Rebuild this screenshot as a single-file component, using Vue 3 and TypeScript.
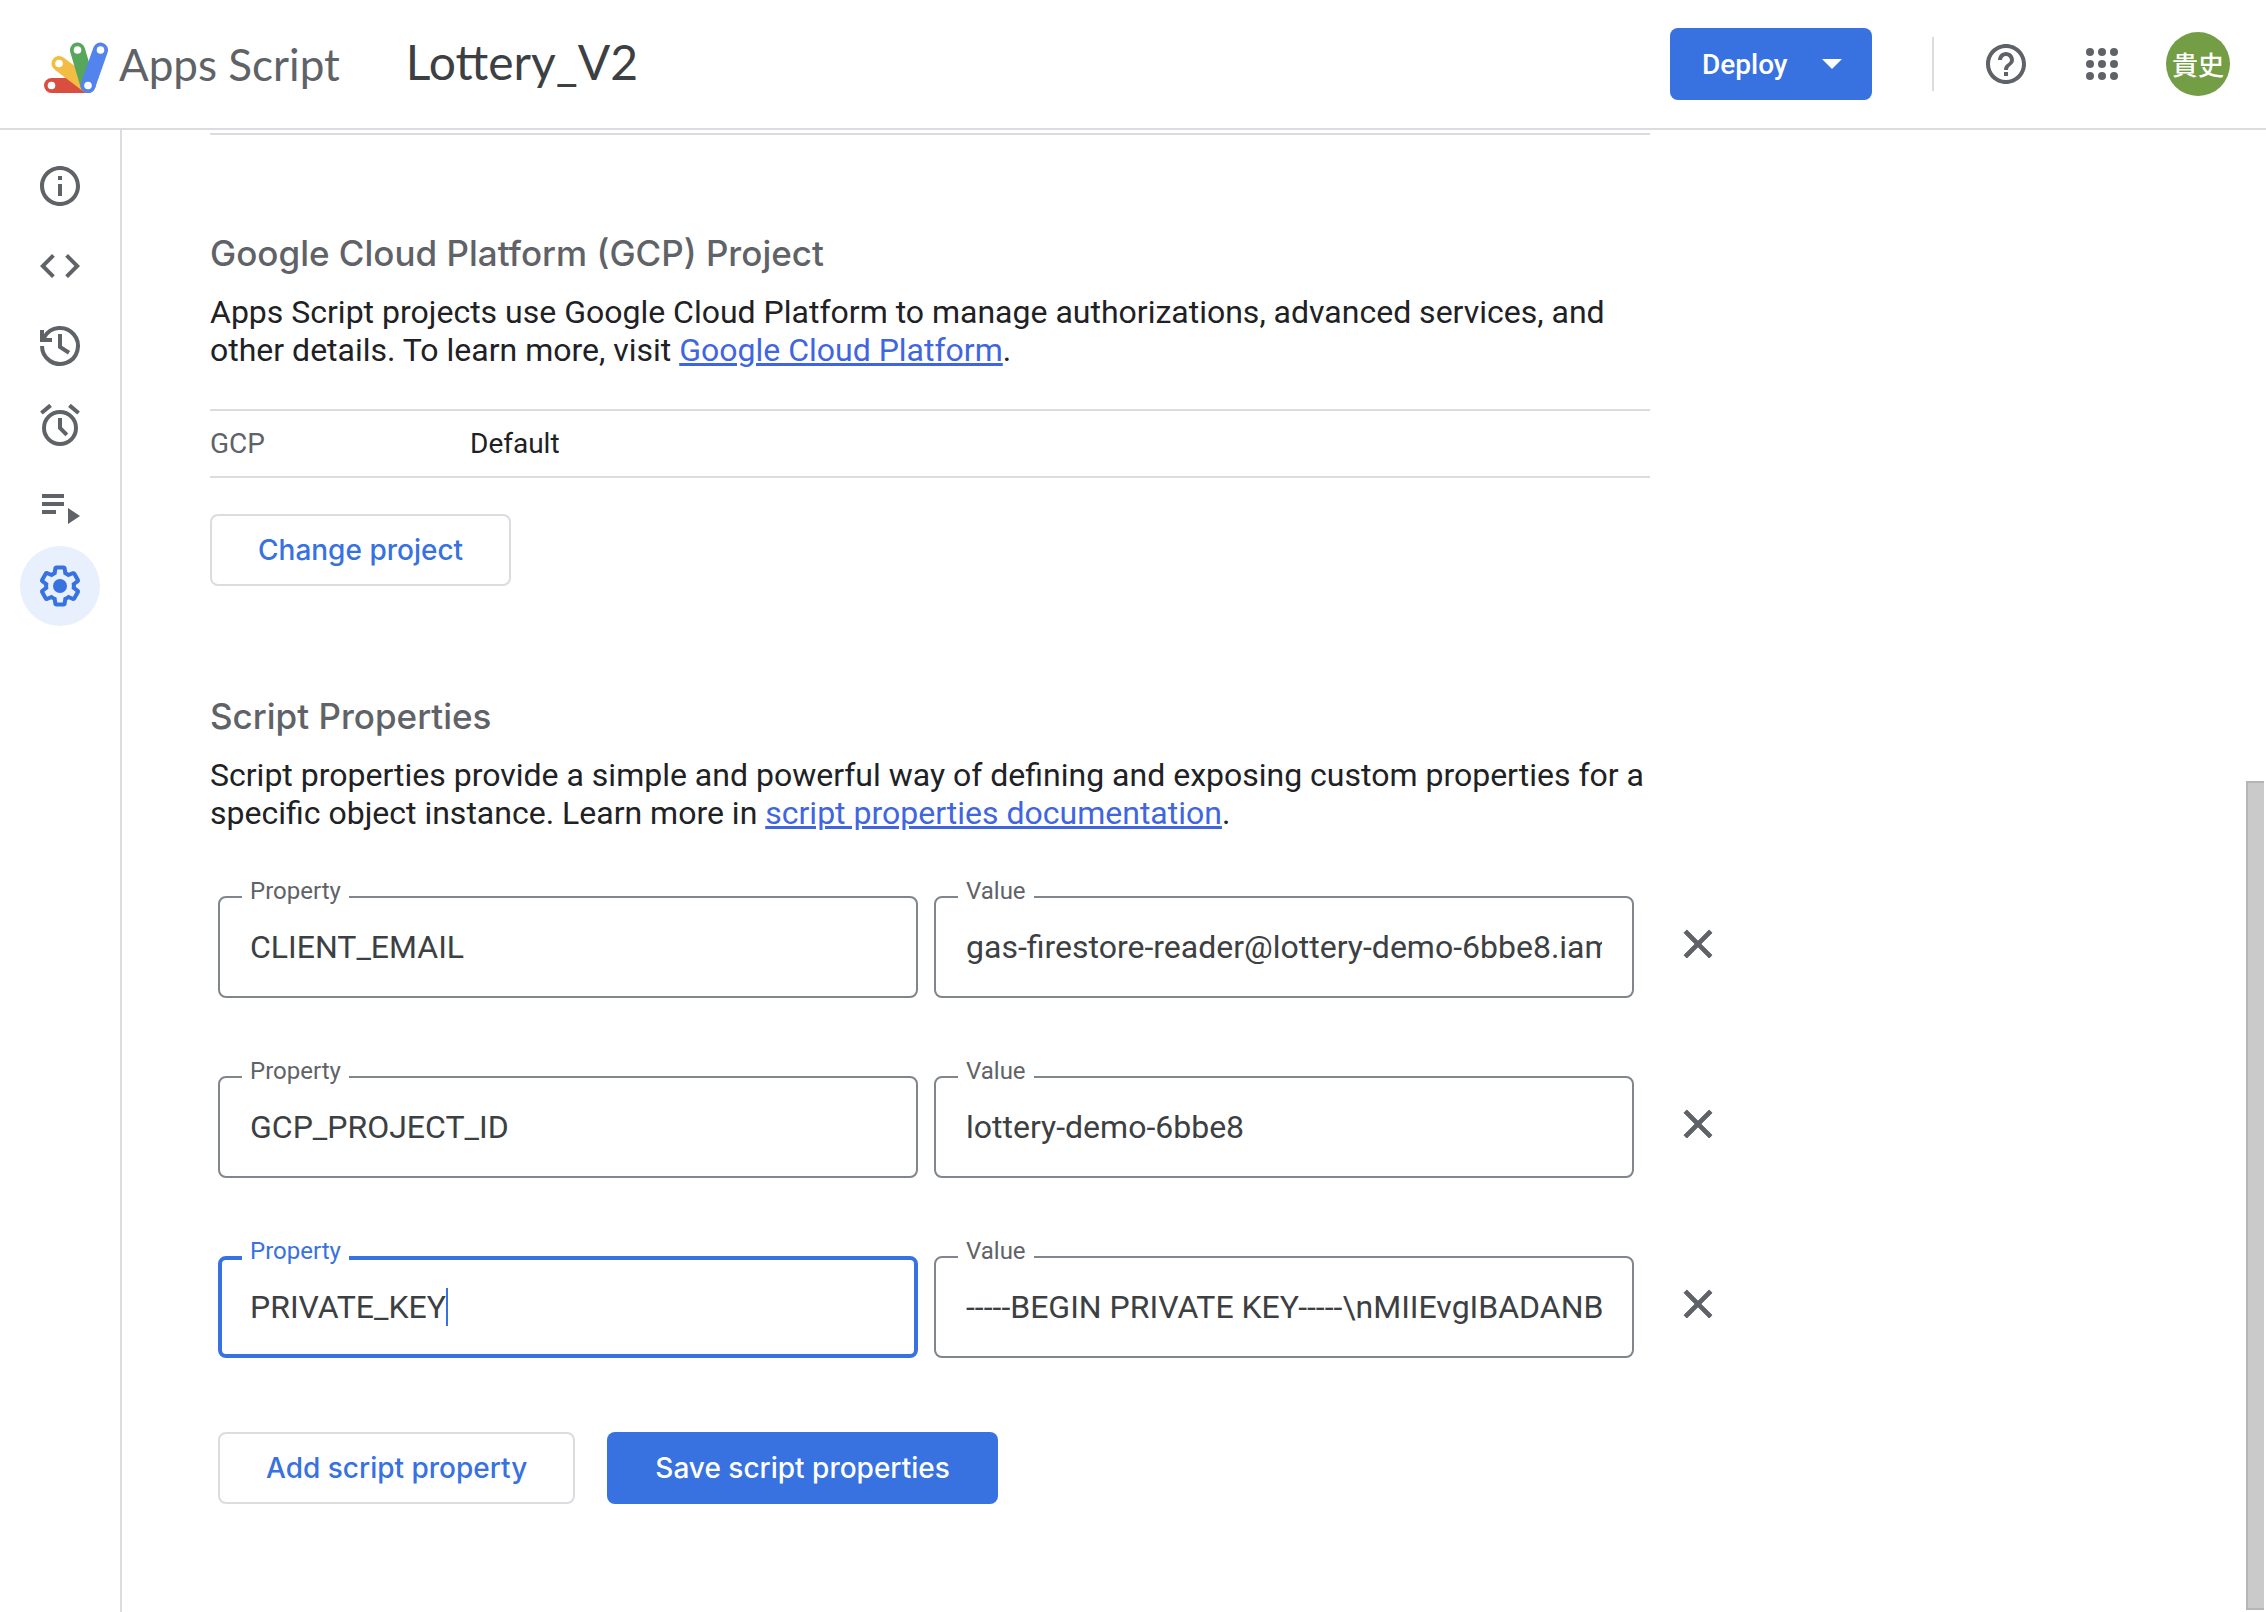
<script setup lang="ts">
import { onMounted, ref } from 'vue'

interface NavItem {
  id: string
  label: string
  active?: boolean
}

interface ScriptProperty {
  id: number
  name: string
  value: string
}

const navItems: NavItem[] = [
  { id: 'overview', label: 'Overview' },
  { id: 'editor', label: 'Editor' },
  { id: 'history', label: 'Project history' },
  { id: 'triggers', label: 'Triggers' },
  { id: 'executions', label: 'Executions' },
  { id: 'settings', label: 'Project settings', active: true },
]

const properties = ref<ScriptProperty[]>([
  { id: 1, name: 'CLIENT_EMAIL', value: 'gas-firestore-reader@lottery-demo-6bbe8.iam.gserviceaccount.com' },
  { id: 2, name: 'GCP_PROJECT_ID', value: 'lottery-demo-6bbe8' },
  { id: 3, name: 'PRIVATE_KEY', value: '-----BEGIN PRIVATE KEY-----\\nMIIEvgIBADANBgkqhkiG9w0BAQEFAASC' },
])

const focusedId = ref(3)
const caretOffset = ref(0)

const scroll = { thumb: 56 }

// The caret sits at the end of the focused name, so its offset is the width of that text.
function placeCaret() {
  const input = document.getElementById(`name-${focusedId.value}`) as HTMLInputElement | null
  const context = document.createElement('canvas').getContext('2d')
  if (!input || !context) return
  const style = getComputedStyle(input)
  context.font = `${style.fontSize} ${style.fontFamily}`
  caretOffset.value = Math.round(context.measureText(input.value).width)
}

function removeProperty(id: number) {
  properties.value = properties.value.filter((p) => p.id !== id)
}

function addProperty() {
  properties.value.push({ id: Date.now(), name: '', value: '' })
}

onMounted(placeCaret)
</script>

<template>
  <div class="page">
    <header class="topbar">
      <a class="brand" href="#">
        <svg class="logo" viewBox="0 0 66 52" aria-hidden="true">
          <g fill="none" stroke-width="15" stroke-linecap="round">
            <path stroke="#d94f3f" d="M8.5 43.5H45" />
            <path stroke="#f2bd42" d="M16 21.5L45 43.5" />
            <path stroke="#58a55c" d="M34.5 8L45 43.5" />
            <path stroke="#5383ec" d="M57.5 8L45 43.5" />
          </g>
          <g fill="#fff">
            <circle cx="8.5" cy="43.5" r="3.8" />
            <circle cx="16" cy="21.5" r="3.8" />
            <circle cx="34.5" cy="8" r="3.8" />
            <circle cx="57.5" cy="8" r="3.8" />
            <circle cx="45" cy="43.5" r="3.8" />
          </g>
        </svg>
        <span class="brand-name">Apps Script</span>
      </a>
      <h1 class="project-name">Lottery_V2</h1>
      <div class="actions">
        <button class="deploy" type="button">
          Deploy
          <svg class="arrow" viewBox="0 0 20 10" aria-hidden="true"><path d="M0 0h20L10 10z" /></svg>
        </button>
        <span class="divider"></span>
        <button class="icon-button" type="button" aria-label="Help">
          <svg class="icon" viewBox="0 0 24 24">
            <path d="M11 18h2v-2h-2v2zm1-16C6.48 2 2 6.48 2 12s4.48 10 10 10 10-4.48 10-10S17.52 2 12 2zm0 18c-4.41 0-8-3.59-8-8s3.59-8 8-8 8 3.59 8 8-3.59 8-8 8zm0-14c-2.21 0-4 1.79-4 4h2c0-1.1.9-2 2-2s2 .9 2 2c0 2-3 1.75-3 5h2c0-2.25 3-2.5 3-5 0-2.21-1.79-4-4-4z" />
          </svg>
        </button>
        <button class="icon-button" type="button" aria-label="Google apps">
          <svg class="icon" viewBox="0 0 24 24">
            <template v-for="y in [6, 12, 18]" :key="y">
              <circle v-for="x in [6, 12, 18]" :key="x" :cx="x" :cy="y" r="2" />
            </template>
          </svg>
        </button>
        <button class="avatar" type="button">貴史</button>
      </div>
    </header>

    <div class="body">
      <nav class="sidebar" aria-label="Project">
        <a
          v-for="item in navItems"
          :key="item.id"
          class="nav-item"
          :class="{ active: item.active }"
          href="#"
          :aria-label="item.label"
        >
          <svg class="icon" viewBox="0 0 24 24">
            <path v-if="item.id === 'overview'" d="M11 7h2v2h-2zm0 4h2v6h-2zm1-9C6.48 2 2 6.48 2 12s4.48 10 10 10 10-4.48 10-10S17.52 2 12 2zm0 18c-4.41 0-8-3.59-8-8s3.59-8 8-8 8 3.59 8 8-3.59 8-8 8z" />
            <path v-else-if="item.id === 'editor'" d="M9.4 16.6L4.8 12l4.6-4.6L8 6l-6 6 6 6 1.4-1.4zm5.2 0l4.6-4.6-4.6-4.6L16 6l6 6-6 6-1.4-1.4z" />
            <g v-else-if="item.id === 'history'" fill="none" stroke="currentColor" stroke-width="2">
              <path d="M3 12A9 9 0 1 0 4.200 7.500L3.600 8.600" />
              <path d="M3 4v5h5" />
              <path d="M12 6v6.500l4.500 2.900" />
            </g>
            <g v-else-if="item.id === 'triggers'" fill="none" stroke="currentColor" stroke-width="2">
              <circle cx="12" cy="13" r="8" />
              <path d="M12 8v5l3.400 3.400M2.700 5.500l4.600-3.800M21.300 5.500l-4.600-3.800" />
            </g>
            <path v-else-if="item.id === 'executions'" d="M3 6h11v2H3zM3 10h11v2H3zM3 14h7v2H3zM16 13l6 4-6 4z" />
            <g v-else>
              <path d="M13.85 22.25h-3.7c-.74 0-1.36-.54-1.45-1.27l-.27-1.89c-.27-.14-.53-.29-.79-.46l-1.8.72c-.7.26-1.47-.03-1.81-.65L2.2 15.53c-.35-.66-.2-1.44.36-1.88l1.53-1.19c-.01-.15-.02-.3-.02-.46 0-.15.01-.31.02-.46l-1.52-1.19c-.59-.45-.74-1.26-.37-1.88l1.85-3.19c.34-.62 1.11-.9 1.79-.63l1.81.73c.26-.17.52-.32.78-.46l.27-1.91c.09-.7.71-1.25 1.44-1.25h3.7c.74 0 1.36.54 1.45 1.27l.27 1.89c.27.14.53.29.79.46l1.8-.72c.71-.26 1.48.03 1.82.65l1.84 3.18c.36.66.2 1.44-.36 1.88l-1.52 1.19c.01.15.02.3.02.46s-.01.31-.02.46l1.52 1.19c.56.45.72 1.23.37 1.86l-1.86 3.22c-.34.62-1.11.9-1.8.63l-1.8-.72c-.26.17-.52.32-.78.46l-.27 1.91c-.1.68-.72 1.22-1.46 1.22zm-3.23-2h2.76l.37-2.55.53-.22c.44-.18.88-.44 1.34-.78l.45-.34 2.38.96 1.38-2.4-2.03-1.58.07-.56c.03-.26.06-.51.06-.78s-.03-.53-.06-.78l-.07-.56 2.03-1.58-1.39-2.4-2.39.96-.45-.35c-.42-.32-.87-.58-1.33-.77l-.52-.22-.37-2.55h-2.76l-.37 2.55-.53.21c-.44.19-.88.44-1.34.79l-.45.33-2.38-.95-1.39 2.39 2.03 1.58-.07.56a7 7 0 0 0-.06.79c0 .26.02.53.06.78l.07.56-2.03 1.58 1.38 2.4 2.39-.96.45.35c.43.33.86.58 1.33.77l.53.22.38 2.55z" />
              <circle cx="12" cy="12" r="3.5" />
            </g>
          </svg>
        </a>
      </nav>

      <main class="content">
        <hr class="rule" />

        <section class="section">
          <h2>Google Cloud Platform (GCP) Project</h2>
          <p>
            Apps Script projects use Google Cloud Platform to manage authorizations, advanced services, and
            other details. To learn more, visit <a href="#">Google Cloud Platform</a>.
          </p>
          <table class="details">
            <tbody>
              <tr>
                <th scope="row">GCP</th>
                <td>Default</td>
              </tr>
            </tbody>
          </table>
          <button class="button outlined" type="button">Change project</button>
        </section>

        <section class="section">
          <h2>Script Properties</h2>
          <p>
            Script properties provide a simple and powerful way of defining and exposing custom properties for a
            specific object instance. Learn more in <a href="#">script properties documentation</a>.
          </p>
          <form class="properties" @submit.prevent>
            <div v-for="property in properties" :key="property.id" class="row">
              <div class="field" :class="{ focused: property.id === focusedId }">
                <input :id="`name-${property.id}`" v-model="property.name" type="text" />
                <label :for="`name-${property.id}`">Property</label>
                <span v-if="property.id === focusedId" class="caret-line">
                  <span class="caret" :style="{ marginLeft: `${caretOffset}px` }"></span>
                </span>
              </div>
              <div class="field">
                <input :id="`value-${property.id}`" v-model="property.value" type="text" />
                <label :for="`value-${property.id}`">Value</label>
              </div>
              <button class="remove" type="button" aria-label="Remove script property" @click="removeProperty(property.id)">
                <svg class="icon" viewBox="0 0 24 24">
                  <path d="M19 6.41L17.59 5 12 10.59 6.41 5 5 6.41 10.59 12 5 17.59 6.41 19 12 13.41 17.59 19 19 17.59 13.41 12z" />
                </svg>
              </button>
            </div>
            <div class="form-actions">
              <button class="button outlined" type="button" @click="addProperty">Add script property</button>
              <button class="button filled" type="submit">Save script properties</button>
            </div>
          </form>
        </section>
      </main>

      <div class="scroll-track" aria-hidden="true">
        <div class="scroll-thumb" :style="{ height: `${scroll.thumb}%` }"></div>
      </div>
    </div>
  </div>
</template>

<style>
body {
  margin: 0;
  background: #fff;
}
</style>

<style scoped>
.page {
  display: flex;
  flex-direction: column;
  min-height: 100vh;
  font-family: Roboto, "Liberation Sans", sans-serif;
  color: #202124;
}

.page *,
.page {
  box-sizing: border-box;
}

button {
  font-family: inherit;
  border: 0;
  background: none;
  padding: 0;
  margin: 0;
  cursor: pointer;
}

.icon {
  display: block;
  width: 48px;
  height: 48px;
  fill: currentColor;
}

.topbar {
  display: flex;
  align-items: center;
  height: 130px;
  padding: 0 36px 0 43px;
  border-bottom: 2px solid #dadce0;
}

.brand {
  display: flex;
  align-items: center;
  gap: 10px;
  color: #5f6368;
  text-decoration: none;
}

.logo {
  width: 66px;
  height: 52px;
  margin-top: 8px;
}

.brand-name {
  font: 400 44px/56px Lato, sans-serif;
}

.project-name {
  margin: 0 0 4px 66px;
  font: 400 48px/56px Lato, sans-serif;
  color: #3c4043;
}

.actions {
  display: flex;
  align-items: center;
  margin-left: auto;
}

.deploy {
  display: flex;
  align-items: center;
  justify-content: space-between;
  width: 202px;
  height: 72px;
  padding: 0 30px 0 32px;
  border-radius: 8px;
  background: #3871e0;
  color: #fff;
  font-size: 28px;
  font-weight: 500;
}

.arrow {
  width: 20px;
  height: 10px;
  fill: #fff;
}

.divider {
  width: 2px;
  height: 54px;
  margin: 0 48px 0 60px;
  background: #dadce0;
}

.icon-button {
  margin-right: 48px;
  color: #5f6368;
}

.icon-button:nth-last-child(2) {
  margin-right: 40px;
}

.avatar {
  width: 64px;
  height: 64px;
  border-radius: 50%;
  background: #749e46;
  color: #fff;
  font: 500 26px/64px "Noto Sans CJK JP", sans-serif;
}

.body {
  display: flex;
  flex: 1;
}

.sidebar {
  display: flex;
  flex-direction: column;
  align-items: center;
  flex: none;
  width: 122px;
  padding-top: 16px;
  border-right: 2px solid #dadce0;
}

.nav-item {
  display: grid;
  place-items: center;
  width: 80px;
  height: 80px;
  border-radius: 50%;
  color: #5f6368;
}

.nav-item.active {
  background: #e8effd;
  color: #3871e0;
}

.content {
  flex: 1;
  min-width: 0;
  padding: 3px 88px 104px;
}

.rule {
  max-width: 1440px;
  height: 2px;
  margin: 0;
  border: 0;
  background: #dadce0;
}

.section {
  padding-top: 96px;
}

.section + .section {
  padding-top: 108px;
}

h2 {
  margin: 0 0 18px;
  font: 500 35px/44px Inter, sans-serif;
  color: #5f6368;
}

p {
  max-width: 1440px;
  margin: 0;
  font-size: 32px;
  line-height: 38px;
}

p a {
  color: #3f66e0;
}

.details {
  width: 100%;
  max-width: 1440px;
  margin: 40px 0 36px;
  border-collapse: collapse;
  border-top: 2px solid #dadce0;
  border-bottom: 2px solid #dadce0;
  font-size: 28px;
  line-height: 33px;
}

.details th,
.details td {
  padding: 16px 0;
  text-align: left;
  font-weight: 400;
}

.details th {
  width: 260px;
  color: #5f6368;
}

.button {
  height: 72px;
  padding: 0 46px;
  border: 2px solid transparent;
  border-radius: 8px;
  font: 500 28px/36px Inter, sans-serif;
}

.button.outlined {
  border-color: #dadce0;
  color: #3871e0;
}

.button.filled {
  background: #3871e0;
  color: #fff;
}

.properties {
  max-width: 1520px;
  margin-top: 64px;
  padding-left: 8px;
}

.row {
  display: flex;
  align-items: center;
  gap: 16px;
}

.row + .row {
  margin-top: 78px;
}

.field {
  position: relative;
  flex: 0 1 700px;
  min-width: 0;
}

.field input {
  display: block;
  width: 100%;
  height: 102px;
  padding: 0 30px;
  border: 2px solid #80868b;
  border-radius: 8px;
  outline: 0;
  background: transparent;
  font: 400 32px/38px Roboto, sans-serif;
  color: #3c4043;
}

.field label {
  position: absolute;
  top: -17px;
  left: 24px;
  padding: 0 8px;
  background: #fff;
  font-size: 24px;
  line-height: 24px;
  color: #5f6368;
}

.field.focused input {
  padding: 0 28px;
  border: 4px solid #3871e0;
}

.field.focused label {
  color: #3871e0;
}

.caret-line {
  position: absolute;
  top: 32px;
  left: 32px;
  pointer-events: none;
}

.caret {
  display: block;
  width: 2px;
  height: 38px;
  background: #3871e0;
}

.remove {
  margin: 0 0 6px 24px;
  color: #5f6368;
}

.remove .icon {
  stroke: currentColor;
  stroke-width: 0.5;
}

.form-actions {
  display: flex;
  gap: 32px;
  margin-top: 74px;
}

.scroll-track {
  display: flex;
  flex-direction: column;
  justify-content: flex-end;
  flex: none;
  width: 20px;
  padding: 0 2px 2px 0;
}

.scroll-thumb {
  border: 2px solid #b5b5b5;
  border-right: 0;
  background: #cacaca;
}
</style>
